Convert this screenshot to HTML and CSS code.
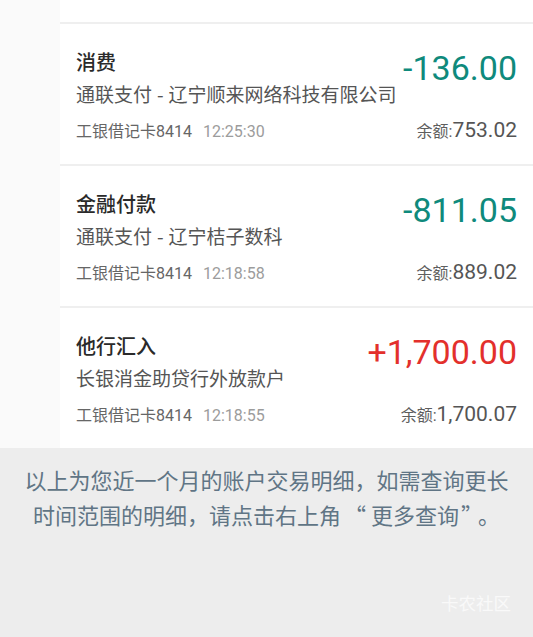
FILE: index.html
```html
<!DOCTYPE html>
<html lang="zh-CN">
<head>
<meta charset="utf-8">
<title>交易明细</title>
<link rel="stylesheet" href="styles.css">
</head>
<body>
<div class="list-area">
  <div class="gutter"></div>
  <div class="list">
    <div class="prev-tail"></div>
    <div class="row">
      <div class="row-top">
        <div class="info">
          <div class="title">消费</div>
          <div class="sub">通联支付<span class="dash">-</span>辽宁顺来网络科技有限公司</div>
        </div>
        <div class="amount out">-136.00</div>
      </div>
      <div class="row-bottom">
        <div class="meta"><span class="card">工银借记卡8414</span><span class="time">12:25:30</span></div>
        <div class="balance"><span class="bal-label">余额:</span><span class="bal-num">753.02</span></div>
      </div>
    </div>
    <div class="row">
      <div class="row-top">
        <div class="info">
          <div class="title">金融付款</div>
          <div class="sub">通联支付<span class="dash">-</span>辽宁桔子数科</div>
        </div>
        <div class="amount out">-811.05</div>
      </div>
      <div class="row-bottom">
        <div class="meta"><span class="card">工银借记卡8414</span><span class="time">12:18:58</span></div>
        <div class="balance"><span class="bal-label">余额:</span><span class="bal-num">889.02</span></div>
      </div>
    </div>
    <div class="row">
      <div class="row-top">
        <div class="info">
          <div class="title">他行汇入</div>
          <div class="sub">长银消金助贷行外放款户</div>
        </div>
        <div class="amount in">+1,700.00</div>
      </div>
      <div class="row-bottom">
        <div class="meta"><span class="card">工银借记卡8414</span><span class="time">12:18:55</span></div>
        <div class="balance"><span class="bal-label">余额:</span><span class="bal-num">1,700.07</span></div>
      </div>
    </div>
  </div>
</div>
<div class="footer">
  <p class="notice">以上为您近一个月的账户交易明细，如需查询更长时间范围的明细，请点击右上角<span class="q-open">“</span>更多查询<span class="q-close">”</span>。</p>
  <div class="watermark">卡农社区</div>
</div>
</body>
</html>
```
FILE: styles.css
```css
html, body {
  margin: 0;
  padding: 0;
}
body {
  width: 533px;
  height: 637px;
  overflow: hidden;
  background: #ededed;
  font-family: Roboto, "Noto Sans CJK SC", "Noto Sans", sans-serif;
}
.list-area {
  display: flex;
  background: #ffffff;
}
.gutter {
  width: 60px;
  flex: none;
  background: #fafafa;
}
.list {
  flex: 1;
  background: #ffffff;
}
.prev-tail {
  height: 22px;
}
.row {
  border-top: 2px solid #efefef;
  padding: 24px 16px 23px 16px;
}
.row-top {
  display: flex;
  justify-content: space-between;
  align-items: flex-start;
}
.title {
  font-family: "Noto Sans CJK SC", sans-serif;
  font-size: 20px;
  line-height: 28px;
  font-weight: 500;
  color: #2a2a2a;
}
.sub {
  margin-top: 4px;
  font-family: "Noto Sans CJK SC", sans-serif;
  font-size: 19px;
  line-height: 28px;
  color: #555555;
}
.dash {
  margin: 0 5px;
}
.amount {
  font-size: 34px;
  line-height: 40px;
  white-space: nowrap;
}
.amount.out {
  color: #0f8a7c;
}
.amount.in {
  color: #e3302c;
}
.row-bottom {
  margin-top: 11px;
  display: flex;
  justify-content: space-between;
  align-items: baseline;
  height: 22px;
  line-height: 22px;
}
.meta {
  font-size: 16px;
}
.card {
  color: #666666;
}
.time {
  margin-left: 11px;
  color: #9c9c9c;
}
.bal-label {
  font-size: 16px;
  color: #5e5e5e;
}
.bal-num {
  font-size: 21px;
  color: #555555;
}
.footer {
  padding: 14px 22px 0 22px;
}
.notice {
  margin: 0;
  font-family: "Noto Sans CJK SC", sans-serif;
  font-size: 22px;
  line-height: 35px;
  color: #607585;
  text-align: center;
}
.q-open {
  margin: 0 5px 0 3px;
}
.q-close {
  margin: 0 6px 0 2px;
}
.watermark {
  margin-top: 59px;
  text-align: right;
  font-family: "Noto Sans CJK SC", sans-serif;
  font-size: 17.5px;
  line-height: 24px;
  color: #f9f9f9;
}
```
